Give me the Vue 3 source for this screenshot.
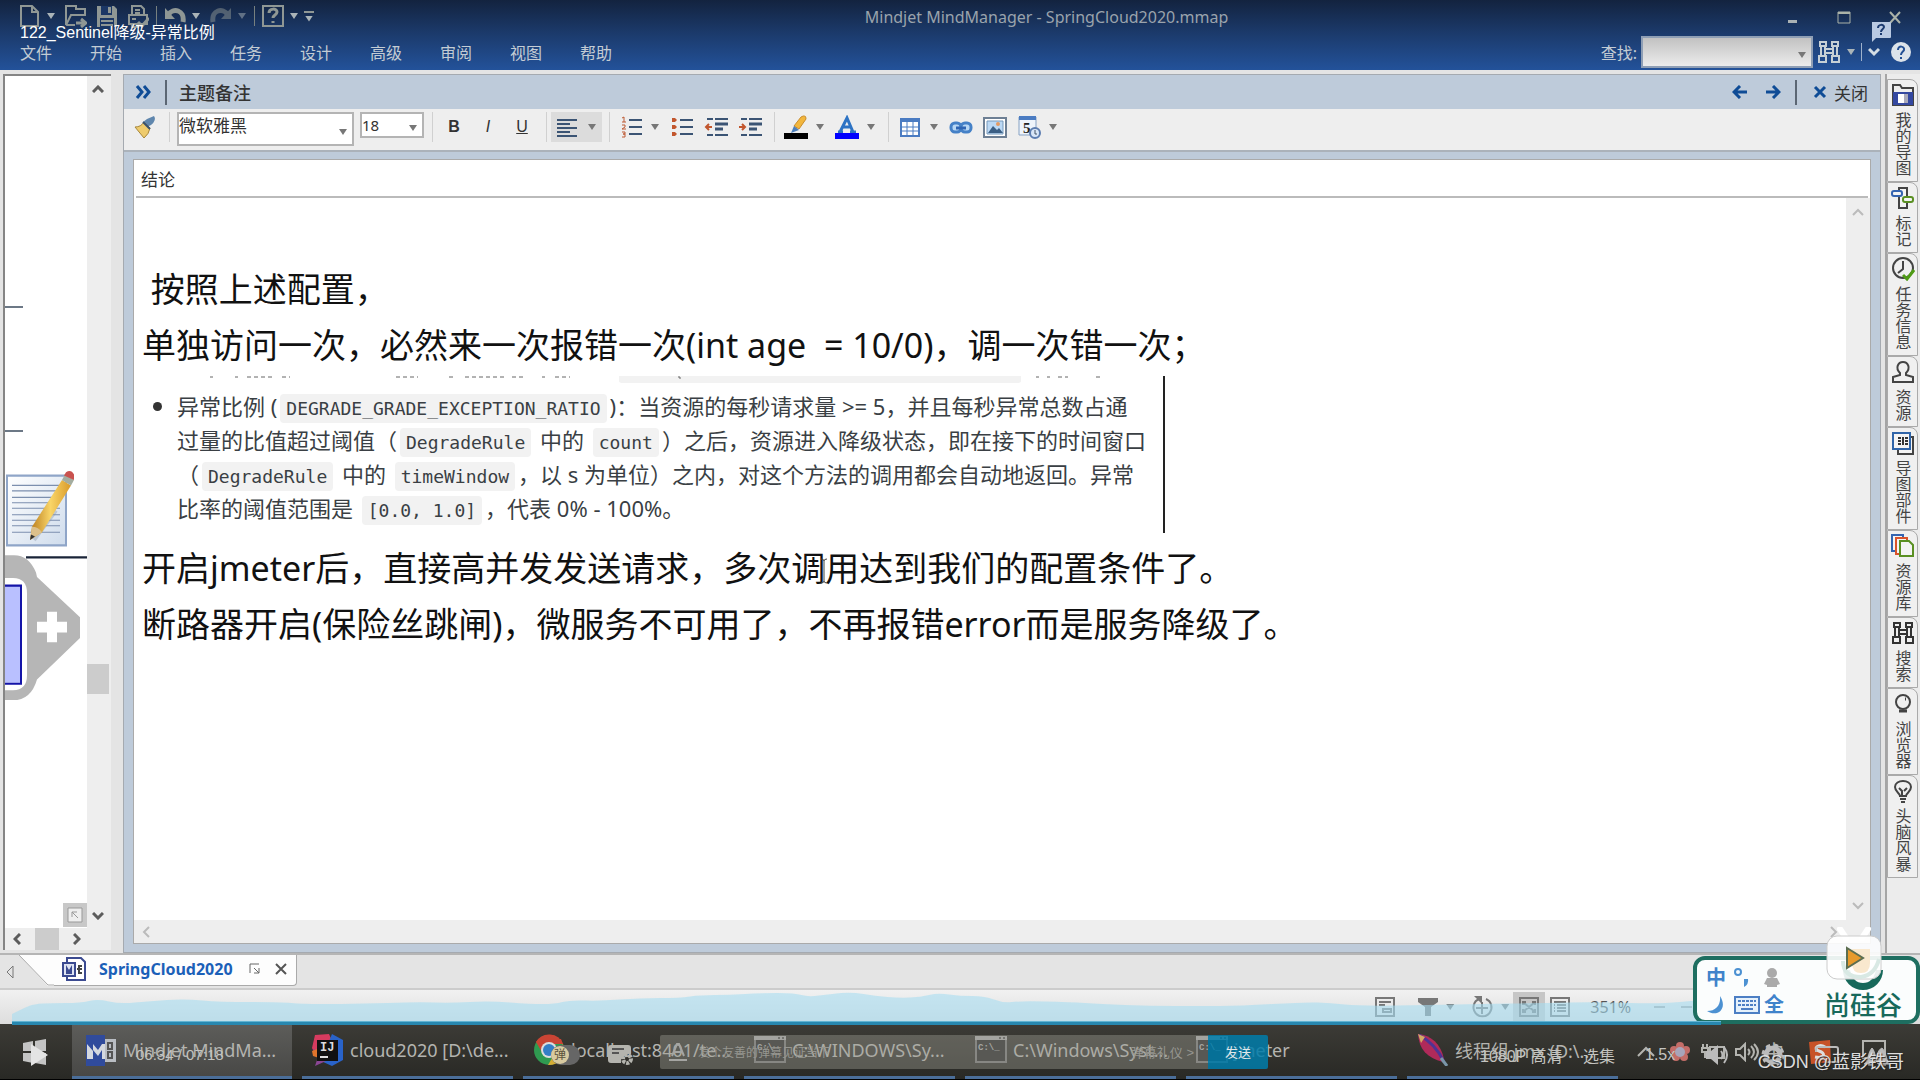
<script setup>
import { ref } from 'vue'

const menus = ['文件', '开始', '插入', '任务', '设计', '高级', '审阅', '视图', '帮助']

const sideTabs = [
    { name: '我的导图', icon: 'maps', size: 'tall' },
    { name: '标记', icon: 'marker', size: 'short' },
    { name: '任务信息', icon: 'task', size: 'tall' },
    { name: '资源', icon: 'person', size: 'short' },
    { name: '导图部件', icon: 'parts', size: 'tall' },
    { name: '资源库', icon: 'library', size: 'mid' },
    { name: '搜索', icon: 'binoculars', size: 'short' },
    { name: '浏览器', icon: 'globe', size: 'mid' },
    { name: '头脑风暴', icon: 'bulb', size: 'tall' },
]

const tasks = [
    { name: 'Mindjet MindMa...', icon: 'mindjet', active: true },
    { name: 'cloud2020 [D:\\de...', icon: 'idea' },
    { name: 'localhost:8401/te...', icon: 'chrome' },
    { name: 'C:\\WINDOWS\\Sy...', icon: 'cmd' },
    { name: 'C:\\Windows\\Syst...', icon: 'cmd' },
    { name: 'jmeter', icon: 'cmd' },
    { name: '线程组.jmx (D:\\...', icon: 'feather' },
]

const font = ref('微软雅黑')
const fontSize = ref('18')
const keyword = ref('')
const danmaku = ref('')

// danmaku density curve above the progress bar
const wave = [
    [0, 21], [12, 15], [22, 11], [40, 10], [68, 10], [86, 6], [108, 11], [138, 8], [173, 6],
    [208, 9], [268, 9], [290, 11], [328, 11], [378, 10], [408, 9], [438, 10], [478, 8], [518, 11],
    [543, 11], [558, 7], [588, 8], [628, 5], [668, 5], [688, 2], [718, 2], [748, 0], [783, 0],
    [796, 4], [818, 1], [840, -1], [863, 3], [888, 5], [908, 4], [926, 0], [948, 3], [973, 3],
    [991, 10], [1008, 8], [1058, 9], [1088, 11], [1138, 13], [1188, 13], [1228, 13], [1293, 9],
    [1318, 10], [1348, 13], [1418, 12], [1468, 11], [1528, 10], [1588, 9], [1648, 11], [1688, 7], [1709, 10],
]

const wavePath = () => {
    let d = `M0 30 L0 ${wave[0][1]}`
    for (let i = 1; i < wave.length - 1; i++) {
        const mx = (wave[i][0] + wave[i + 1][0]) / 2
        const my = (wave[i][1] + wave[i + 1][1]) / 2
        d += ` Q${wave[i][0]} ${wave[i][1]} ${mx} ${my}`
    }
    return d + ' L1709 10 L1709 30 Z'
}
</script>

<template>
    <div class="screen">
        <header class="ribbon">
            <div class="title-row">
                <div class="quick">
                    <button class="quick-btn" aria-label="新建">
                        <svg width="22" height="24" viewBox="0 0 22 24"><path d="M2 2h11l6 6v14H2zM13 2v6h6" class="line" /></svg>
                        <i class="caret" />
                    </button>
                    <button class="quick-btn" aria-label="打开">
                        <svg width="22" height="24" viewBox="0 0 22 24"><path d="M20 11V5h-9V2H1v19l5-10h15M1 21h9" class="line" /><path d="M11 19h9M16 15l5 4-5 4" class="line thick" /></svg>
                    </button>
                    <button class="quick-btn" aria-label="保存">
                        <svg width="22" height="24" viewBox="0 0 22 24"><path d="M1 2h17l3 3v18H1z" fill="#8f9794" /><path d="M5 2h11v9H5zM4 14h14v9H4z" fill="#1b3765" /><path d="M12 3h3v6h-3zM5 16h12v2H5zM5 20h12v2H5z" fill="#8f9794" /></svg>
                    </button>
                    <button class="quick-btn" aria-label="打印">
                        <svg width="22" height="24" viewBox="0 0 22 24"><path d="M5 11V2h9l3 3v6M2 11h18v9H2zM5 20v3h7M8 6h5M8 9h5M5 15h4" class="line" /><path d="M11 18l4 4 7-8" class="line thick" /></svg>
                    </button>
                    <span class="quick-sep" />
                    <button class="quick-btn" aria-label="撤销">
                        <svg width="22" height="24" viewBox="0 0 22 24"><path d="M4 11C9 3 21 6 19 18" class="line wide" /><path d="M1 4v11h10z" fill="#8f9794" /></svg>
                        <i class="caret" />
                    </button>
                    <button class="quick-btn dim" aria-label="重做">
                        <svg width="22" height="24" viewBox="0 0 22 24"><path d="M18 11C13 3 1 6 3 18" class="line wide" /><path d="M21 4v11H11z" fill="#8f9794" /></svg>
                        <i class="caret" />
                    </button>
                    <span class="quick-sep" />
                    <button class="quick-btn" aria-label="帮助主题">
                        <svg width="22" height="24" viewBox="0 0 22 24"><path d="M1 2h20v20H1z" class="line" /><path d="M7 9c0-5 8-5 8-1 0 3-4 3-4 6M11 17v2" class="line thick" /></svg>
                        <i class="caret" />
                    </button>
                    <button class="quick-btn more" aria-label="自定义"><i class="caret" /></button>
                </div>
                <h1 class="app-title">Mindjet MindManager - SpringCloud2020.mmap</h1>
                <div class="window-btns">
                    <button aria-label="最小化"><svg width="14" height="14" viewBox="0 0 14 14"><path d="M2 10h9v3H2z" fill="#aab2b4" /></svg></button>
                    <button aria-label="最大化"><svg width="14" height="14" viewBox="0 0 14 14"><path d="M1 2h12v11H1z" fill="none" stroke="#aab2a8" /><path d="M1 2h12v2H1z" fill="#aab2a8" /></svg></button>
                    <button aria-label="关闭窗口"><svg width="14" height="14" viewBox="0 0 14 14"><path d="M2 2l10 11M12 2L2 13" fill="none" stroke="#aab2a8" stroke-width="2" /></svg></button>
                </div>
            </div>
            <div class="menu-row">
                <nav class="menus">
                    <a v-for="menu in menus" :key="menu" href="#">{{ menu }}</a>
                </nav>
                <div class="search">
                    <label for="keyword">查找:</label>
                    <div class="select-wrap search-box">
                        <select id="keyword" v-model="keyword"><option value=""></option></select>
                        <i class="caret dark" />
                    </div>
                    <button class="find-btn" aria-label="搜索">
                        <svg width="24" height="24" viewBox="0 0 24 24"><path d="M3 2h6v4H3zM15 2h6v4h-6zM4 6v10M8 6v10M16 6v10M20 6v10M2 16h7v6H2zM15 16h7v6h-7zM8 9h8M8 13h8" fill="none" stroke="#c6d0d6" stroke-width="2" /></svg>
                        <i class="caret" />
                    </button>
                    <span class="search-sep" />
                    <button aria-label="折叠"><svg width="12" height="10" viewBox="0 0 12 10"><path d="M1 2l5 5 5-5" fill="none" stroke="#d4dde4" stroke-width="3" /></svg></button>
                    <button class="help-btn" aria-label="帮助">
                        <svg width="22" height="22" viewBox="0 0 22 22"><circle cx="11" cy="11" r="10" fill="#dce3ea" /><path d="M8 9c0-5 7-4 6 0-1 2-3 2-3 5M11 16v2" fill="none" stroke="#234f93" stroke-width="2" /></svg>
                    </button>
                </div>
            </div>
            <p class="video-title">122_Sentinel降级-异常比例</p>
            <button class="feedback" aria-label="反馈">
                <svg width="22" height="21" viewBox="0 0 22 21"><path d="M2 1h18q1 0 1 1v14q0 1-1 1H6l-4 4z" fill="#b9c9e2" /><path d="M8 7c0-4 6-4 6-1 0 2-3 2-3 5M11 12v2" fill="none" stroke="#1b3a70" stroke-width="2" /></svg>
            </button>
        </header>

        <main class="workspace">
            <section class="map">
                <div class="map-body">
                    <div class="canvas">
                        <svg width="82" height="640" viewBox="5 76 82 640">
                            <defs>
                                <linearGradient id="note" x2="1" y2="1"><stop stop-color="#fff" /><stop offset="1" stop-color="#cfdcec" /></linearGradient>
                                <linearGradient id="pencil"><stop stop-color="#b87a1c" /><stop offset=".5" stop-color="#f9d568" /><stop offset="1" stop-color="#d99a28" /></linearGradient>
                            </defs>
                            <path d="M5 307h18M5 431h18" stroke="#6c7886" stroke-width="2" />
                            <g transform="matrix(1 0 0 1.09 0 -40)">
                                <path d="M7 473h59v64H7z" fill="url(#note)" stroke="#8fa5c8" stroke-width="2" />
                                <path d="M12 482h48M12 487h48M12 493h48M12 498h48M12 503h48M12 509h48M12 514h48M12 519h48M12 525h48" stroke="#7c8fae" />
                                <path d="M34 532L56 505" stroke="#8b98a8" stroke-width="4" opacity=".4" />
                                <path d="M30 532l2-12 30-43 9 5-29 43z" fill="url(#pencil)" />
                                <path d="M30 532l2-12q6 0 10 5z" fill="#dcc08b" /><path d="M30 532l1-5 4 2z" fill="#333" />
                                <path d="M62 477l3-5 9 5-3 5z" fill="#a4ada0" /><path d="M64 473l2-3q5-3 8 2v5z" fill="#c9524f" />
                                <path d="M26 548h61" stroke="#1a2438" stroke-width="2" />
                                <path d="M5 546h9q15 0 22 16l1 4 43 37v19l-43 38q-6 19-24 19H5v-9h8q14 0 14-14v-75q0-14-14-14H5z" fill="#b6b6b6" />
                                <path d="M5 574h16v89H5z" fill="#b9c0ff" /><path d="M5 574h16v90H5" fill="none" stroke="#1414a8" stroke-width="2" />
                                <path d="M37 612h30M52 598v28" stroke="#fff" stroke-width="10" />
                            </g>
                        </svg>
                        <button class="locate" aria-label="定位"><svg width="16" height="16" viewBox="0 0 16 16"><path d="M1 1h14v14H1z" fill="#eee" stroke="#999" /><path d="M5 10V5h5M5 5l6 6" fill="none" stroke="#999" /></svg></button>
                    </div>
                    <div class="v-scroll">
                        <svg width="12" height="8" viewBox="0 0 12 8"><path d="M1 7l5-5 5 5" class="arrow" /></svg>
                        <span class="thumb" />
                        <svg width="12" height="8" viewBox="0 0 12 8"><path d="M1 1l5 5 5-5" class="arrow" /></svg>
                    </div>
                </div>
                <div class="h-scroll">
                    <svg width="8" height="12" viewBox="0 0 8 12"><path d="M7 1L2 6l5 5" class="arrow" /></svg>
                    <span class="thumb" />
                    <svg width="8" height="12" viewBox="0 0 8 12"><path d="M1 1l5 5-5 5" class="arrow" /></svg>
                </div>
            </section>

            <section class="notes">
                <div class="notes-head">
                    <button aria-label="折叠备注"><svg width="18" height="16" viewBox="0 0 18 16"><path d="M2 2l5 6-5 6M9 2l5 6-5 6" class="blue" /></svg></button>
                    <span class="head-sep" />
                    <h2>主题备注</h2>
                    <button aria-label="上一个"><svg width="16" height="14" viewBox="0 0 16 14"><path d="M8 1L2 7l6 6M2 7h13" class="blue" /></svg></button>
                    <button aria-label="下一个"><svg width="16" height="14" viewBox="0 0 16 14"><path d="M8 1l6 6-6 6M14 7H1" class="blue" /></svg></button>
                    <span class="head-sep roomy" />
                    <button class="close-btn"><svg width="14" height="14" viewBox="0 0 14 14"><path d="M2 2l10 10M12 2L2 12" class="blue" /></svg>关闭</button>
                </div>

                <div class="toolbar">
                    <div class="group">
                        <button class="tool" aria-label="格式刷"><svg width="24" height="24" viewBox="0 0 24 24"><path d="M21 1q3 4-3 9l-4 2-4-5 4-3z" fill="#5f86ad" /><path d="M2 12q6 0 9-5l6 6q-1 6-6 10z" fill="#eecb6d" stroke="#a7873b" /><path d="M10 7l7 7" stroke="#38516e" stroke-width="2" /></svg></button>
                    </div>
                    <div class="group fonts">
                        <div class="select-wrap font-name"><select v-model="font" aria-label="字体"><option>微软雅黑</option></select><i class="caret dark" /></div>
                        <div class="select-wrap font-size"><select v-model="fontSize" aria-label="字号"><option>18</option></select><i class="caret dark" /></div>
                    </div>
                    <div class="group">
                        <button class="tool"><b>B</b></button>
                        <button class="tool"><em>I</em></button>
                        <button class="tool"><u>U</u></button>
                    </div>
                    <div class="group">
                        <button class="tool split pressed" aria-label="对齐"><svg width="24" height="24" viewBox="0 0 24 24"><path d="M1 5h20M1 9h13M1 13h20M1 17h13M1 21h20" class="ink" /></svg><i class="caret dark" /></button>
                    </div>
                    <div class="group">
                        <button class="tool split" aria-label="编号">
                            <svg width="24" height="24" viewBox="0 0 24 24"><path d="M10 5h13M10 12h13M10 19h13" class="ink" /><path d="M3 3l2-1v5M3 7h4M3 10h3v2l-3 2h4M3 17h3v2H4h2v3H3" fill="none" stroke="#bd5b34" /></svg><i class="caret dark" />
                        </button>
                        <button class="tool" aria-label="项目符号"><svg width="24" height="24" viewBox="0 0 24 24"><path d="M10 5h13M10 12h13M10 19h13" class="ink" /><path d="M2 3h3l2 2-2 2H2zM2 10h3l2 2-2 2H2zM2 17h3l2 2-2 2H2z" fill="#c2562d" /></svg></button>
                        <button class="tool" aria-label="减少缩进"><svg width="24" height="24" viewBox="0 0 24 24"><path d="M3 4h6M11 4h13M11 20h13M3 20h6" class="ink" /><path d="M11 9h13M11 14h8" class="ink heavy" /><path d="M8 12H2M5 9l-3 3 3 3" fill="none" stroke="#c2562d" stroke-width="2" /></svg></button>
                        <button class="tool" aria-label="增加缩进"><svg width="24" height="24" viewBox="0 0 24 24"><path d="M3 4h6M11 4h13M11 20h13M3 20h6" class="ink" /><path d="M11 9h13M11 14h8" class="ink heavy" /><path d="M1 12h6M4 9l3 3-3 3" fill="none" stroke="#c2562d" stroke-width="2" /></svg></button>
                    </div>
                    <div class="group">
                        <button class="tool split" aria-label="突出显示"><svg width="24" height="24" viewBox="0 0 24 24"><path d="M10 11l7-9q5-3 5 2l-7 10z" fill="#f2b63d" stroke="#c98d2c" /><path d="M10 11l5 4-8 3z" fill="#4b7ebb" /><path d="M0 18h24v6H0z" /></svg><i class="caret dark" /></button>
                        <button class="tool split" aria-label="字体颜色"><svg width="24" height="24" viewBox="0 0 24 24"><path d="M3 17h5M15 17h6M5 17l7-14 6 14M8 12h8" fill="none" stroke="#2d73c4" stroke-width="3" /><path d="M0 18h24v6H0z" fill="#00f" /></svg><i class="caret dark" /></button>
                    </div>
                    <div class="group">
                        <button class="tool split" aria-label="表格"><svg width="24" height="24" viewBox="0 0 24 24"><path d="M3 4h18v17H3z" fill="#fff" stroke="#4b7cc2" stroke-width="2" /><path d="M3 3h18v4H3z" fill="#4b7cc2" /><path d="M3 12h18M3 16h18M9 7v14M15 7v14" stroke="#4b7cc2" /></svg><i class="caret dark" /></button>
                        <button class="tool" aria-label="链接"><svg width="24" height="24" viewBox="0 0 24 24"><rect x="2" y="8" width="10" height="9" rx="4" class="chain" /><rect x="12" y="8" width="10" height="9" rx="4" class="chain" /><path d="M7 13h10" stroke="#2f65b3" stroke-width="3" /></svg></button>
                        <button class="tool" aria-label="图片"><svg width="24" height="24" viewBox="0 0 24 24"><path d="M1 3h22v19H1z" fill="#fff" stroke="#6d7f94" stroke-width="2" /><path d="M4 6h16v13H4z" fill="#bcd9f5" stroke="#7799bb" /><path d="M5 18l5-7 4 4 2-2 4 5z" fill="#3b5f85" /><circle cx="15" cy="9" r="2" fill="#e39a63" /></svg></button>
                        <button class="tool split" aria-label="日期时间"><svg width="24" height="24" viewBox="0 0 24 24"><path d="M2 2h17v18H2z" fill="#eef4fb" stroke="#87a2c4" /><path d="M2 1h17v4H2z" fill="#4b7cc2" /><text x="6" y="18" font-size="15" font-weight="700" fill="#222" font-family="Liberation Serif, serif">5</text><circle cx="18" cy="18" r="5" fill="#d9e6f7" stroke="#5c7db0" stroke-width="2" /><path d="M18 15v4h2" fill="none" stroke="#456" /></svg><i class="caret dark" /></button>
                    </div>
                </div>

                <div class="editor-wrap">
                    <article class="editor">
                        <div class="topic">结论</div>
                        <div class="paper">
                            <div class="content">
                                <p>&nbsp;按照上述配置，</p>
                                <p>单独访问一次，必然来一次报错一次(int age&nbsp; = 10/0)，调一次错一次；</p>
                                <div class="excerpt">
                                    <svg class="cut" width="960" height="7" viewBox="0 0 960 7"><path d="M459 0h402v5q0 2-4 2H463q-4 0-4-2z" fill="#f2f2f2" /><path d="M50 1h3M75 1h3M87 1h25M122 1h8M236 1h22M289 1h4M305 1h40M352 1h12M382 1h3M395 1h15M518 1h2v2M876 1h3M887 1h3M898 1h10M936 1h4" stroke="#666" stroke-dasharray="4 3" fill="none" /></svg>
                                    <ul>
                                        <li>
                                            <p>异常比例 (<code>DEGRADE_GRADE_EXCEPTION_RATIO</code>)：当资源的每秒请求量 &gt;= 5，并且每秒异常总数占通</p>
                                            <p>过量的比值超过阈值（<code>DegradeRule</code> 中的 <code>count</code>）之后，资源进入降级状态，即在接下的时间窗口</p>
                                            <p>（<code>DegradeRule</code> 中的 <code>timeWindow</code>，以 s 为单位）之内，对这个方法的调用都会自动地返回。异常</p>
                                            <p>比率的阈值范围是 <code>[0.0, 1.0]</code>，代表 0% - 100%。</p>
                                        </li>
                                    </ul>
                                </div>
                                <p>开启jmeter后，直接高并发发送请求，多次调用达到我们的配置条件了。</p>
                                <p>断路器开启(保险丝跳闸)，微服务不可用了，不再报错error而是服务降级了。</p>
                            </div>
                            <div class="paper-scroll">
                                <svg width="12" height="8" viewBox="0 0 12 8"><path d="M1 7l5-5 5 5" class="arrow pale" /></svg>
                                <svg width="12" height="8" viewBox="0 0 12 8"><path d="M1 1l5 5 5-5" class="arrow pale" /></svg>
                            </div>
                        </div>
                        <div class="paper-hscroll">
                            <svg width="8" height="12" viewBox="0 0 8 12"><path d="M7 1L2 6l5 5" class="arrow pale" /></svg>
                            <svg width="8" height="12" viewBox="0 0 8 12"><path d="M1 1l5 5-5 5" class="arrow pale" /></svg>
                        </div>
                    </article>
                </div>
            </section>

            <aside class="side-tabs">
                <button v-for="tab in sideTabs" :key="tab.name" class="side-tab" :class="tab.size">
                    <svg width="24" height="24" viewBox="0 0 24 24">
                        <g v-if="tab.icon === 'maps'"><path d="M2 2h7l2 3h11v17H2z" fill="#eee" stroke="#444" stroke-width="2" /><path d="M2 9h20v13H2z" fill="#3448a0" /><path d="M7 11h6v9H7z" fill="#fff" /><path d="M13 11h4v9h-4z" fill="#aab" /></g>
                        <g v-else-if="tab.icon === 'marker'" fill="#f4f4f4" stroke-width="2"><path d="M8 2h8v20H8z" stroke="#444" /><rect x="1" y="5" width="10" height="5" rx="2" stroke="#3464b0" /><rect x="12" y="11" width="10" height="5" rx="2" stroke="#5a9023" /></g>
                        <g v-else-if="tab.icon === 'task'" fill="none" stroke="#444" stroke-width="2"><circle cx="12" cy="11" r="10" /><path d="M12 4v8l-5 4" /><path d="M12 18l4 4 7-9" stroke="#4f9b16" stroke-width="3" /></g>
                        <g v-else-if="tab.icon === 'person'" fill="none" stroke="#444" stroke-width="2"><path d="M9 13C4 8 7 2 12 2s8 6 3 11v2l7 2v5H2v-5l7-2z" /></g>
                        <g v-else-if="tab.icon === 'parts'" fill="#f4f4f4" stroke-width="2"><path d="M7 6h15v17H7z" stroke="#444" /><path d="M2 2h17v16H2z" stroke="#2f64a8" /><path d="M7 7h3M7 10h3M7 13h3M12 6v8M14 7h3M14 10h3M14 13h3" stroke="#333" /></g>
                        <g v-else-if="tab.icon === 'library'" fill="#f4f4f4" stroke-width="2"><path d="M1 1h11v16H1z" stroke="#3464b0" /><path d="M5 4h11v16H5z" stroke="#d9532c" /><path d="M9 7h9l4 4v11H9z" stroke="#5a9023" /></g>
                        <g v-else-if="tab.icon === 'binoculars'" fill="none" stroke="#333" stroke-width="2"><path d="M3 2h6v4H3zM15 2h6v4h-6zM4 6v10M8 6v10M16 6v10M20 6v10M2 16h7v6H2zM15 16h7v6h-7zM8 9h8M8 13h8" /></g>
                        <g v-else-if="tab.icon === 'globe'" fill="none" stroke="#444" stroke-width="2"><circle cx="12" cy="10" r="7" /><path d="M14 7h1M8 19h8" stroke-width="3" /></g>
                        <g v-else fill="none" stroke="#444" stroke-width="2"><path d="M9 17c0-3-5-4-5-9C4 0 20 0 20 8c0 5-5 6-5 9zM9 20h6M10 23h4M8 9l3 3v5M16 9l-3 3" /></g>
                    </svg>
                    <span>{{ tab.name }}</span>
                </button>
            </aside>
        </main>

        <div class="doc-tabs">
            <svg class="back" width="10" height="16" viewBox="0 0 10 16"><path d="M8 2L2 8l6 6z" fill="none" stroke="#777" /></svg>
            <svg class="slope" width="36" height="31" viewBox="0 0 36 31"><path d="M0 0h36v31h-7z" fill="#fdfdfd" /><path d="M0 0l29 30h7" fill="none" stroke="#aaa" /></svg>
            <div class="doc-tab">
                <svg width="24" height="24" viewBox="0 0 24 24"><path d="M5 1h14l4 4v18H5z" fill="#fff" stroke="#3b4a90" stroke-width="2" /><path d="M1 6h12v13H1z" fill="#dfe4f2" stroke="#3b4a90" stroke-width="2" /><path d="M4 8l3 5 3-5v9H4z" fill="#3b4a90" /><path d="M20 9h-3v7h3M15 12h5" fill="none" stroke="#444" stroke-width="2" /></svg>
                <a href="#">SpringCloud2020</a>
                <svg width="12" height="12" viewBox="0 0 12 12"><path d="M1 10V1h9M5 5l5 5M10 5v5H5" fill="none" stroke="#666" /></svg>
                <button aria-label="关闭文档"><svg width="12" height="12" viewBox="0 0 12 12"><path d="M1 1l10 10M11 1L1 11" fill="none" stroke="#555" stroke-width="2" /></svg></button>
            </div>
        </div>

        <div class="status">
            <button aria-label="备注"><svg width="20" height="20" viewBox="0 0 20 20"><path d="M1 1h18v18H1zM4 5h12M4 8h6M8 12h8v3H8z" class="grey" /></svg></button>
            <button class="filter" aria-label="筛选"><svg width="22" height="20" viewBox="0 0 22 20"><path d="M1 1h20v4l-7 5v9H8v-9L1 5z" fill="#777" /></svg><i class="caret dark" /></button>
            <button aria-label="展开"><svg width="24" height="24" viewBox="0 0 24 24"><path d="M9 4a9 9 0 1 0 7 0M12 7v12M6 13h12" class="grey" /><path d="M4 1h8v8z" fill="#777" /></svg><i class="caret dark" /></button>
            <button class="fit" aria-label="适应窗口"><svg width="20" height="20" viewBox="0 0 20 20"><path d="M1 1h18v18H1zM4 8V5h3M13 5h3v3M16 12v3h-3M7 15H4v-3M5 6l10 8M15 6L5 14" class="grey" /></svg></button>
            <button aria-label="大纲"><svg width="20" height="20" viewBox="0 0 20 20"><path d="M1 1h18v18H1zM4 5h12M7 8h9M7 11h9M7 14h9M4 8h1M4 11h1M4 14h1" class="grey" /></svg></button>
            <span class="zoom">351%</span>
            <span class="dashes"><i /><i /></span>
            <svg class="wave" viewBox="0 0 1709 28" preserveAspectRatio="none"><path :d="wavePath()" fill="#a5dcf2" fill-opacity=".58" /></svg>
            <div class="progress" />
        </div>

        <footer class="taskbar">
            <button class="start" aria-label="开始菜单"><svg width="25" height="26" viewBox="0 0 25 26"><path d="M1 4l10-2v10H1zM13 2l11-2v12H13zM1 14h10v10L1 22zM13 14h11v12l-11-2z" fill="#c4c4c4" /></svg></button>
            <div class="tasks">
                <button v-for="(task, i) in tasks" :key="i" class="task" :class="{ active: task.active }">
                    <svg width="32" height="32" viewBox="0 0 32 32">
                        <g v-if="task.icon === 'mindjet'"><path d="M1 1h19v31H1z" fill="#304b9c" /><path d="M20 5h11v23H20z" fill="#b9bdc3" /><path d="M2 10l6 7V10l5 6 4-6h3v15h-3v-9l-4 6-5-6v9H2z" fill="#d4d8df" /><path d="M23 9h4v6h-4zM23 18h4v6h-4z" fill="none" stroke="#555" stroke-width="2" /></g>
                        <g v-else-if="task.icon === 'idea'"><path d="M3 1l14-1 4 9-17 13-4-8z" fill="#d63b5f" /><path d="M20 0l11 6v20l-11 6-11-5z" fill="#2963c9" /><path d="M1 15l6 2 7 10-11 5 3-9z" fill="#8a4694" /><path d="M0 17l5-2 2 9-6-2z" fill="#df752c" /><path d="M5 6h21v21H5z" fill="#111" /><text x="8" y="17" font-size="12" font-weight="700" fill="#ddd" font-family="Liberation Mono, monospace">IJ</text><path d="M8 23h8" stroke="#ddd" stroke-width="2" /></g>
                        <g v-else-if="task.icon === 'chrome'"><circle cx="16" cy="16" r="15" fill="#2f9a50" /><path d="M3 8A15 15 0 0 1 30 10H17z" fill="#c94434" /><path d="M30 10a15 15 0 0 1-15 21l7-12z" fill="#d6ad35" /><path d="M3 8l7 12 6-10h14L28 5H6z" fill="#c94434" /><circle cx="16" cy="16" r="8" fill="#ddd" /><circle cx="16" cy="16" r="6" fill="#347ec6" /></g>
                        <g v-else-if="task.icon === 'cmd'"><path d="M1 3h30v25H1z" fill="#292929" stroke="#777" stroke-width="2" /><path d="M0 2h32v4H0z" fill="#a7a7a7" /><path d="M24 3h2v2h-2M28 3h2v2h-2" fill="#555" /><text x="3" y="16" font-size="9" font-weight="700" fill="#aaa" font-family="Liberation Mono, monospace">C:\_</text></g>
                        <g v-else><path d="M1 0c13 1 23 10 26 25l-1 3C10 24 2 15 1 0z" fill="#b02a5a" /><path d="M2 1c13 7 20 16 25 27" fill="none" stroke="#4f3394" stroke-width="3" /><path d="M1 0l7 3-4 6z" fill="#d3a864" /><path d="M24 24l6 8" stroke="#7a96a8" stroke-width="3" /></g>
                    </svg>
                    <span>{{ task.name }}</span>
                </button>
            </div>
            <div class="tray">
                <svg width="20" height="12" viewBox="0 0 20 12"><path d="M2 10l8-8 8 8" class="tray-line" /></svg>
                <svg width="20" height="20" viewBox="0 0 20 20"><g fill="#c36d68"><circle cx="10" cy="4" r="4" /><circle cx="16" cy="8" r="4" /><circle cx="14" cy="15" r="4" /><circle cx="6" cy="15" r="4" /><circle cx="4" cy="8" r="4" /></g><circle cx="10" cy="10" r="5" fill="#a7a5ba" /></svg>
                <svg width="24" height="20" viewBox="0 0 24 20"><path d="M2 2v4M6 2v4M1 6h6v4H1zM4 10v5h4M9 5h14v11H9z" class="tray-line" /></svg>
                <svg width="24" height="20" viewBox="0 0 24 20"><path d="M1 7h4l5-5v16l-5-5H1zM13 7q3 3 0 6M16 4q6 6 0 12M19 2q8 8 0 16" class="tray-line" /></svg>
                <span>中</span>
                <svg width="24" height="24" viewBox="0 0 24 24"><path d="M1 2l21-2 1 22-20 2z" fill="#c75227" /><path d="M17 7c-6-4-13 2-6 4s6 8-4 6" fill="none" stroke="#ddd" stroke-width="3" /></svg>
                <svg width="24" height="24" viewBox="0 0 24 24"><path d="M1 1h22v17h-8l-4 4v-4H1z" class="tray-line" /></svg>
            </div>

            <!-- video player controls -->
            <div class="player">
                <button aria-label="播放"><svg width="19" height="24" viewBox="0 0 19 24"><path d="M1 1l17 11L1 23z" fill="#e4e4e4" /></svg></button>
                <span class="time">06:34 / 07:18</span>
                <button class="toggle" aria-label="弹幕开关"><i>弹</i></button>
                <button aria-label="弹幕设置"><svg width="26" height="22" viewBox="0 0 26 22"><path d="M3 1h17q3 0 3 3v6h-5l-5 5v4H3q-3 0-3-3V4q0-3 3-3z" fill="#b4b4ae" /><path d="M4 5h12M4 9h7" stroke="#555" stroke-width="2" /><circle cx="19" cy="15" r="4" fill="none" stroke="#b4b4ae" stroke-width="4" stroke-dasharray="3 1" /></svg></button>
                <label class="danmaku">
                    <svg width="20" height="20" viewBox="0 0 20 20"><path d="M4 14L9 2h2l5 12M6 10h8M1 18h18" fill="none" stroke="#a5a5a2" stroke-width="2" /></svg>
                    <input v-model="danmaku" placeholder="发个友善的弹幕见证当下">
                    <a href="#">弹幕礼仪 &gt;</a>
                </label>
                <button class="send">发送</button>
                <span />
                <button>1080P 高清</button>
                <button>选集</button>
                <button>1.5x</button>
                <button aria-label="音量"><svg width="26" height="22" viewBox="0 0 26 22"><path d="M1 7h5l7-6v20l-7-6H1z" fill="#bbb" /><path d="M16 7q3 4 0 8M19 3q6 8 0 16" fill="none" stroke="#bbb" stroke-width="2" /></svg></button>
                <button aria-label="设置"><svg width="24" height="24" viewBox="0 0 24 24"><circle cx="12" cy="12" r="7" fill="none" stroke="#bbb" stroke-width="5" /><circle cx="12" cy="12" r="10" fill="none" stroke="#bbb" stroke-width="3" stroke-dasharray="4 4" /></svg></button>
                <button aria-label="宽屏"><svg width="24" height="20" viewBox="0 0 24 20"><path d="M3 2h18q2 0 2 2v11q0 2-2 2H11M3 2q-2 0-2 2v3" fill="none" stroke="#bbb" stroke-width="2" /></svg></button>
                <button aria-label="全屏"><svg width="30" height="24" viewBox="0 0 30 24"><path d="M2 21c4-2 4-12 8-16 4 4 4 14 0 16zM16 21c-3-4-1-14 4-16 5 5 4 14 8 16zM6 22h5M18 22h6" fill="#bbb" stroke="#bbb" /></svg></button>
            </div>
            <span class="csdn">CSDN @蓝影铁哥</span>
        </footer>

        <div class="ime">
            <div class="ime-grid">
                <span>中</span>
                <svg width="16" height="22" viewBox="0 0 16 22"><circle cx="4" cy="5" r="3" fill="none" stroke="#4c91d2" stroke-width="2" /><path d="M10 12h4q1 5-4 8" fill="#4c91d2" /></svg>
                <svg width="16" height="20" viewBox="0 0 16 20"><circle cx="8" cy="5" r="5" fill="#aaa" /><path d="M3 10h10l3 6-3 1v2H3v-2l-3-1z" fill="#aaa" /></svg>
                <svg width="20" height="20" viewBox="0 0 20 20"><path d="M14 1c8 12-2 22-13 15C10 16 15 10 14 1z" fill="#4c91d2" /></svg>
                <svg width="26" height="18" viewBox="0 0 26 18"><path d="M1 1h24v16H1z" fill="#e5f1fb" stroke="#4c7fc4" stroke-width="2" /><path d="M4 5h18M4 9h18" stroke="#4c7fc4" stroke-width="2" stroke-dasharray="3 1" /><path d="M7 13h12" stroke="#4c7fc4" stroke-width="2" /></svg>
                <span>全</span>
            </div>
            <div class="brand">
                <svg width="44" height="28" viewBox="0 0 44 28"><path d="M2 6a20 20 0 0 0 40 0h-7q-3 13-13 13T9 6z" fill="#17695b" /></svg>
                <strong>尚硅谷</strong>
            </div>
        </div>
        <svg class="tv" width="58" height="54" viewBox="0 0 58 54">
            <path d="M15 2l6 9M43 2l-6 9" stroke="#fff" stroke-width="6" stroke-linecap="round" />
            <rect x="2" y="9" width="54" height="43" rx="10" fill="#fff" fill-opacity=".9" stroke="#ccc" />
            <path d="M18 34q0 16 18 16 14-2 18-18" fill="none" stroke="#d9e9e4" stroke-width="4" />
            <path d="M27 22h18v14q0 10-9 10t-9-10z" fill="#f9e8ce" />
            <path d="M22 21l16 10-16 10z" fill="#e89a2b" stroke="#5c6e50" stroke-width="2" />
        </svg>
        <svg class="ibeam" width="8" height="26" viewBox="0 0 8 26"><path d="M1 1q3 0 3 2v20q0 2-3 2M7 1q-3 0-3 2M7 25q-3 0-3-2" fill="none" stroke="#444" /></svg>
    </div>
</template>

<style>
body {
    margin: 0;
}
</style>

<style scoped>
.screen {
    position: relative;
    display: flex;
    flex-direction: column;
    min-height: 100vh;
    overflow: hidden;
    background: #e6e6e6;
    font-family: 'Noto Sans', 'Noto Sans CJK SC', sans-serif;
    color: #333;
}

.screen *,
.screen *::before {
    box-sizing: border-box;
}

svg {
    display: block;
    flex-shrink: 0;
}

button {
    display: flex;
    align-items: center;
    padding: 0;
    border: 0;
    background: none;
    color: inherit;
    font: inherit;
    white-space: nowrap;
}

a {
    color: inherit;
    text-decoration: none;
}

h1,
h2,
p,
ul {
    margin: 0;
    padding: 0;
    font-weight: 400;
}

.caret {
    flex-shrink: 0;
    width: 10px;
    height: 6px;
    background: #aab4b8;
    clip-path: polygon(10% 0, 90% 0, 50% 100%);
}

.caret.dark {
    background: #777;
}

.line {
    fill: none;
    stroke: #8f9794;
    stroke-width: 2;
}

.line.thick {
    stroke-width: 3;
}

.line.wide {
    stroke-width: 5;
}

.arrow {
    fill: none;
    stroke: #5c5c5c;
    stroke-width: 3;
}

.arrow.pale {
    stroke: #bbb;
    stroke-width: 2;
}

.blue {
    fill: none;
    stroke: #0f4c96;
    stroke-width: 3;
}

.ink {
    fill: none;
    stroke: #3b5474;
    stroke-width: 2;
}

.ink.heavy {
    stroke-width: 3;
}

.chain {
    fill: #b8d7f4;
    stroke: #4581c7;
    stroke-width: 3;
}

.grey {
    fill: none;
    stroke: #777;
    stroke-width: 2;
}

.select-wrap {
    position: relative;
    display: flex;
}

.select-wrap select {
    width: 100%;
    appearance: none;
    border: 2px solid #b4b4b4;
    border-radius: 0;
    background: #fff;
    color: #333;
    font: inherit;
}

.select-wrap .caret {
    position: absolute;
    right: 6px;
    top: 50%;
    pointer-events: none;
}

/* ribbon */
.ribbon {
    position: relative;
    height: 70px;
    background: linear-gradient(#13233f, #1b3969 45%, #23529a);
    color: #c3ccd4;
}

.title-row {
    display: flex;
    align-items: center;
    height: 34px;
    padding-left: 19px;
}

.quick {
    display: flex;
    align-items: center;
    gap: 9px;
    padding-bottom: 2px;
}

.quick-btn {
    gap: 5px;
}

.quick-btn.dim {
    opacity: 0.5;
}

.quick-sep {
    width: 1px;
    height: 20px;
    margin: 0 -2px;
    background: #77807f;
}

.more {
    margin-left: -4px;
    border-top: 2px solid #8f9794;
    padding-top: 3px;
}

.app-title {
    flex: 1;
    padding-left: 12px;
    text-align: center;
    font-size: 16px;
    color: #9aa3ac;
}

.window-btns {
    display: flex;
}

.window-btns button {
    width: 51px;
    justify-content: center;
}

.menu-row {
    display: flex;
    align-items: center;
    justify-content: space-between;
    height: 36px;
    padding: 0 8px 0 20px;
    font-size: 16px;
}

.menus a {
    display: inline-block;
    width: 70px;
}

.search {
    display: flex;
    align-items: center;
}

.search-box {
    width: 172px;
    height: 32px;
    margin: 0 4px;
}

.search-box select {
    border-color: #8f9fb5;
    background: linear-gradient(#c2c2c2, #ececec);
}

.find-btn {
    gap: 5px;
}

.search-sep {
    width: 1px;
    height: 18px;
    margin: 0 6px 0 5px;
    background: #9fb2cc;
}

.help-btn {
    margin-left: 10px;
}

.video-title {
    position: absolute;
    left: 20px;
    top: 21px;
    font-size: 16px;
    line-height: 24px;
    font-family: 'Liberation Sans', 'Noto Sans CJK SC', sans-serif;
    color: #fff;
}

.feedback {
    position: absolute;
    right: 28px;
    top: 21px;
}

/* workspace */
.workspace {
    flex: 1;
    display: flex;
    padding-top: 4px;
    border-bottom: 2px solid #b5b5b5;
    background: #e4e4e4;
}

.map {
    display: flex;
    flex-direction: column;
    width: 108px;
    margin: 0 12px 3px 3px;
    border: solid #858585;
    border-width: 2px 0 0 2px;
    background: #eee;
}

.map-body {
    flex: 1;
    display: flex;
}

.canvas {
    position: relative;
    width: 82px;
    background: #fff;
}

.locate {
    position: absolute;
    right: 0;
    bottom: 1px;
    padding: 4px;
    background: #c8c8c8;
}

.v-scroll {
    position: relative;
    display: flex;
    flex-direction: column;
    align-items: center;
    justify-content: space-between;
    width: 22px;
    padding: 9px 0 8px;
}

.thumb {
    background: #ccc;
}

.v-scroll .thumb {
    position: absolute;
    top: 69%;
    width: 22px;
    height: 30px;
}

.h-scroll {
    display: flex;
    align-items: center;
    gap: 14px;
    height: 22px;
    padding-left: 8px;
}

.h-scroll .thumb {
    width: 24px;
    height: 22px;
}

.notes {
    flex: 1;
    display: flex;
    flex-direction: column;
    min-width: 0;
    border: 1px solid #a5aab0;
    background: #becbda;
}

.notes-head {
    display: flex;
    align-items: center;
    gap: 17px;
    height: 34px;
    padding: 0 12px 0 11px;
}

.head-sep {
    width: 2px;
    height: 25px;
    margin: 0 -5px;
    background: #5b6673;
}

.head-sep.roomy {
    margin: 0 -1px -1px -3px;
}

.notes-head h2 {
    flex: 1;
    font-size: 18px;
    font-weight: 500;
}

.close-btn {
    gap: 7px;
    font-size: 17px;
}

.toolbar {
    display: flex;
    align-items: center;
    height: 43px;
    padding-bottom: 5px;
    border-bottom: 2px solid #abb2ba;
    background: #eee;
}

.group {
    display: flex;
    align-items: center;
    height: 30px;
    padding: 0 7px 0 4px;
    border-right: 1px solid #d0d0d0;
}

.group:last-child {
    border: 0;
}

.fonts {
    align-items: flex-start;
    gap: 6px;
    padding: 0 8px 0 7px;
}

.font-name {
    width: 177px;
    height: 34px;
    font-size: 17px;
}

.font-name select {
    padding: 0 0 9px;
}

.font-size {
    width: 64px;
    height: 26px;
    font-size: 15px;
}

.font-size select {
    padding: 0;
}

.tool {
    justify-content: center;
    width: 34px;
    height: 30px;
    font: 16px 'Liberation Sans', sans-serif;
}

.tool.split {
    gap: 7px;
    width: 51px;
}

.pressed {
    background: #dcdcdc;
}

.tool b {
    font-weight: 900;
}

.editor-wrap {
    flex: 1;
    display: flex;
    padding: 7px 9px 8px;
}

.editor {
    flex: 1;
    display: flex;
    flex-direction: column;
    min-width: 0;
    border: 1px solid #aaa;
    background: #fff;
}

.topic {
    height: 38px;
    margin: 0 2px;
    padding-left: 5px;
    border-bottom: 2px solid #bbb;
    font-size: 17px;
    line-height: 40px;
}

.paper {
    flex: 1;
    display: flex;
}

.content {
    flex: 1;
    min-width: 0;
    padding: 63px 0 0 8px;
    font-size: 34px;
    line-height: 56px;
    color: #111;
    white-space: nowrap;
}

.paper-scroll {
    display: flex;
    flex-direction: column;
    align-items: center;
    justify-content: space-between;
    width: 24px;
    padding: 10px 0;
    background: #eee;
}

.paper-hscroll {
    display: flex;
    align-items: center;
    justify-content: space-between;
    height: 23px;
    padding: 0 32px 0 8px;
    background: #eee;
}

.excerpt {
    width: 1023px;
    height: 157px;
    margin: 3px 0 7px;
    border-right: 2px solid #222;
}

.cut {
    margin-left: 18px;
}

.excerpt ul {
    padding: 6px 0 0 35px;
    list-style: none;
    font-size: 22px;
    line-height: 34px;
    color: #3a3f44;
}

.excerpt li {
    position: relative;
}

.excerpt li::before {
    content: '';
    position: absolute;
    left: -24px;
    top: 13px;
    width: 9px;
    height: 9px;
    border-radius: 50%;
    background: #333;
}

.excerpt code {
    margin: 0 3px;
    padding: 4px 6px;
    border-radius: 4px;
    background: #f2f2f2;
    font-family: 'DejaVu Sans Mono', monospace;
    font-size: 18px;
    line-height: 20px;
}

/* side tabs */
.side-tabs {
    width: 35px;
    padding-top: 5px;
    border-left: 2px solid #a5a5a5;
    margin-left: 4px;
    background: #ececec;
}

.side-tab {
    flex-direction: column;
    width: 31px;
    height: 71px;
    padding-top: 3px;
    border: 1px solid #aaa;
    border-top-right-radius: 8px;
    background: #f0f0f0;
    font-size: 16px;
    line-height: 24px;
    color: #444;
}

.side-tab.mid {
    height: 87px;
}

.side-tab.tall {
    height: 103px;
}

.side-tab span {
    margin: auto 0;
    writing-mode: vertical-rl;
}

/* document tabs */
.doc-tabs {
    display: flex;
    height: 35px;
    border-bottom: 2px solid #ccc;
    background: #e4e4e4;
}

.back {
    margin: 9px 4px 0 5px;
}

.slope {
    margin-right: -1px;
}

.doc-tab {
    display: flex;
    align-items: center;
    height: 31px;
    padding: 0 9px 2px 8px;
    border: solid #aaa;
    border-width: 0 1px 1px 0;
    border-radius: 0 0 4px 0;
    background: #fdfdfd;
}

.doc-tab a {
    margin: 0 16px 0 13px;
    font-size: 16px;
    font-weight: 700;
    color: #1b60b8;
}

.doc-tab button {
    margin-left: 14px;
}

/* status bar */
.status {
    position: relative;
    display: flex;
    align-items: center;
    justify-content: flex-end;
    height: 34px;
    padding-right: 228px;
    background: linear-gradient(#f1f1f1, #ddd);
}

.status button {
    gap: 6px;
}

.status .filter {
    margin: 0 15px 0 22px;
}

.status .fit {
    justify-content: center;
    width: 32px;
    height: 30px;
    margin: 0 5px 0 3px;
    background: #c6c6c6;
}

.zoom {
    margin: 0 23px 0 20px;
    font-size: 16px;
    color: #555;
}

.dashes {
    display: flex;
    gap: 16px;
}

.dashes i {
    width: 11px;
    height: 2px;
    background: #aaa;
}

.wave {
    position: absolute;
    left: 12px;
    bottom: 3px;
    width: calc(100% - 211px);
    height: 28px;
    overflow: visible;
}

.progress {
    position: absolute;
    left: 12px;
    right: 199px;
    bottom: -1px;
    height: 4px;
    border-top: 1px solid #62b4d3;
    background: #2888b0;
    z-index: 2;
}

/* taskbar */
.taskbar {
    position: relative;
    display: flex;
    height: 56px;
    border-bottom: 1px solid #000;
    background: linear-gradient(#3c3b36, #292925);
    color: #b4b4b0;
}

.start {
    justify-content: center;
    width: 72px;
    padding-right: 4px;
}

.tasks {
    display: flex;
    gap: 10px;
}

.task {
    gap: 6px;
    width: 211px;
    padding: 0 10px;
    border-bottom: 3px solid #4b6e99;
    font-size: 18px;
}

.task.active {
    width: 220px;
    padding-left: 13px;
    background: linear-gradient(#5d5d5a, #484846);
}

.tray {
    display: grid;
    grid-template-columns: 34px 31px 34px 29px 44px 54px 58px;
    align-items: center;
    margin-left: auto;
    font-size: 20px;
}

.tray-line {
    fill: none;
    stroke: #b4b4b0;
    stroke-width: 2;
}

.player {
    position: absolute;
    inset: 0;
    display: grid;
    grid-template-columns: 106px 415px 57px 52px 548px 60px 1fr 103px 62px 60px 56px 54px 47px 58px;
    align-items: center;
    padding: 6px 0 0 30px;
    color: #c4c4c0;
    font: 16px 'Liberation Sans', 'Noto Sans CJK SC', sans-serif;
}

.time {
    font-size: 15px;
}

.toggle {
    width: 29px;
    height: 20px;
    border-radius: 10px;
    background: #666;
}

.toggle i {
    width: 18px;
    height: 18px;
    border-radius: 50%;
    background: #d8caa0;
    color: #5b523c;
    font-size: 12px;
    font-style: normal;
    line-height: 18px;
}

.danmaku {
    display: flex;
    align-items: center;
    gap: 10px;
    height: 34px;
    margin-top: -6px;
    padding: 0 14px 0 8px;
    border-radius: 2px 0 0 2px;
    background: rgba(160, 160, 150, 0.4);
    color: #969690;
    font-size: 13px;
}

.danmaku input {
    flex: 1;
    min-width: 0;
    padding: 0;
    border: 0;
    background: none;
    font: 12px 'Noto Sans CJK SC', sans-serif;
}

.danmaku input::placeholder {
    color: #969690;
}

.send {
    justify-content: center;
    height: 34px;
    margin-top: -6px;
    border-radius: 0 2px 2px 0;
    background: rgba(0, 125, 170, 0.85);
    color: #e2e8ea;
    font-size: 13px;
}

.csdn {
    position: absolute;
    right: 16px;
    bottom: 4px;
    font: 18px/26px 'Liberation Sans', 'Noto Sans CJK SC', sans-serif;
    color: #ddd;
    text-shadow: 1px 1px 1px #222;
}

/* floating input method bar */
.ime {
    position: absolute;
    right: 0;
    bottom: 56px;
    display: flex;
    justify-content: space-between;
    width: 227px;
    height: 68px;
    padding: 4px 14px 0 9px;
    border: 4px solid #1e6e60;
    border-radius: 12px;
    background: #fbfdfd;
}

.ime-grid {
    display: grid;
    grid-template-columns: 28px 30px 22px;
    grid-template-rows: 27px 27px;
    align-items: center;
    color: #3f83cb;
    font-size: 20px;
    font-weight: 700;
    line-height: 26px;
}

.brand {
    display: flex;
    flex-direction: column;
    align-items: center;
    color: #17695b;
    font-size: 26px;
    line-height: 26px;
}

.brand strong {
    font-weight: 500;
}

.tv {
    position: absolute;
    right: 37px;
    bottom: 99px;
}

.ibeam {
    position: absolute;
    left: 820px;
    top: 558px;
}
</style>
